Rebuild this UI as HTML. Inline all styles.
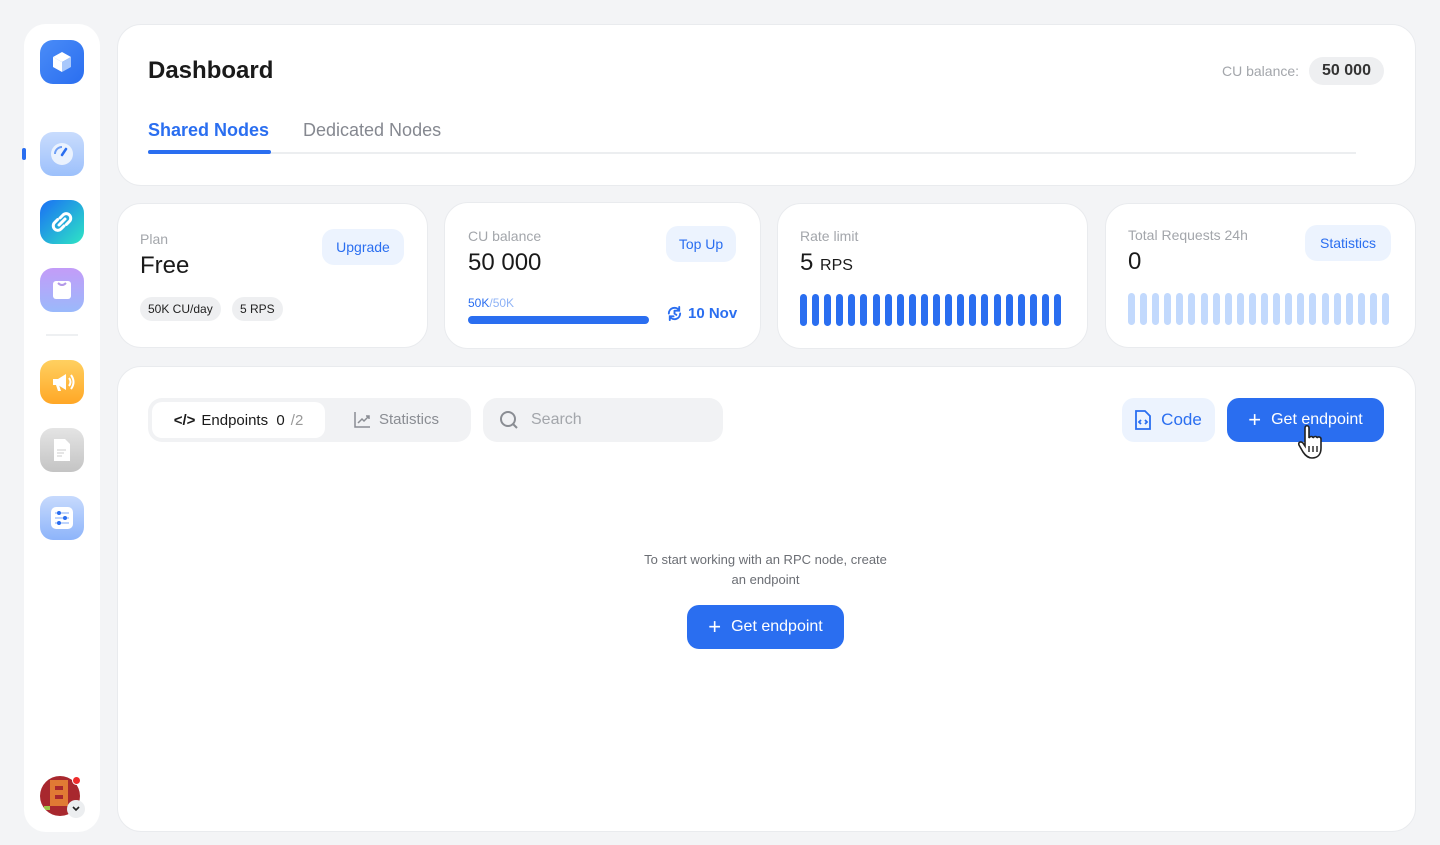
<!DOCTYPE html>
<html><head><meta charset="utf-8"><style>
*{box-sizing:border-box;margin:0;padding:0}
body{width:1440px;height:845px;background:#f3f4f6;font-family:"Liberation Sans",sans-serif;position:relative;overflow:hidden;color:#1a1a1a}
.abs{position:absolute}
.card{position:absolute;background:#fff;border:1px solid #e9ebee;border-radius:24px}
.side{left:24px;top:24px;width:76px;height:808px;background:#fff;border-radius:22px}
.ic{position:absolute;left:40px;width:44px;height:44px;border-radius:13px;display:flex;align-items:center;justify-content:center}
.lbl{font-size:14px;color:#a3a6ab}
.pill{position:absolute;background:#ecf3fe;color:#2a6ef0;font-size:14px;border-radius:12px;display:flex;align-items:center;justify-content:center}
.tag{position:absolute;background:#eeeff1;border-radius:12px;font-size:12px;height:24px;display:flex;align-items:center;padding:0 8px;color:#222}
.bars{position:absolute;display:flex;gap:5.1px}
.bars i{display:block;width:7px;height:32px;border-radius:4px}
.btn{position:absolute;background:#2a6ef0;color:#fff;border-radius:12px;font-size:16px;display:flex;align-items:center;justify-content:center;gap:10px}
</style></head><body>
<div class="abs side"></div>
<div class="ic" style="top:40px;background:linear-gradient(135deg,#4a8cf7,#2a6ef0)"><svg width="24" height="24" viewBox="0 0 24 24"><path d="M12 2 21 7 12 12 3 7Z" fill="#fff"/><path d="M3 7 12 12 12 22 3 17Z" fill="#fff"/><path d="M21 7 12 12 12 22 21 17Z" fill="#a9c8fb"/></svg></div>
<div class="abs" style="left:22px;top:148px;width:4px;height:12px;border-radius:2px;background:#2a6ef0"></div>
<div class="ic" style="top:132px;background:linear-gradient(180deg,#c9dcfd,#9cc0fb)"><svg width="26" height="26" viewBox="0 0 26 26"><circle cx="13" cy="13" r="11" fill="#eaf2fe"/><path d="M13 14 17 8" stroke="#2a6ef0" stroke-width="2.5" stroke-linecap="round"/><path d="M6 13a7 7 0 0 1 7-7" stroke="#6f9ff5" stroke-width="2" fill="none"/></svg></div>
<div class="ic" style="top:200px;background:linear-gradient(135deg,#1a6ff5,#2ee6c4)"><svg width="28" height="28" viewBox="0 0 28 28" fill="none" stroke="#fff" stroke-width="3" stroke-linecap="round"><path d="M12 10l3-3a4.5 4.5 0 0 1 6.4 6.4l-3 3"/><path d="M16 18l-3 3a4.5 4.5 0 0 1-6.4-6.4l3-3"/><path d="M11 17l6-6"/></svg></div>
<div class="ic" style="top:268px;background:linear-gradient(180deg,#c39cf8,#9ab9fb)"><svg width="22" height="22" viewBox="0 0 22 22"><rect x="2" y="2" width="18" height="18" rx="3" fill="#fff"/><path d="M7 4q4 4 8 0" stroke="#b49ae8" stroke-width="2" fill="none"/></svg></div>
<div class="abs" style="left:46px;top:334px;width:32px;height:2px;background:#eef0f2"></div>
<div class="ic" style="top:360px;background:linear-gradient(180deg,#ffd060,#ffa726)"><svg width="28" height="28" viewBox="0 0 28 28"><path d="M5 11h5l8-5v16l-8-5H5z" fill="#fff"/><path d="M8 17l2 6h3l-2-6" fill="#fff"/><path d="M21 10q3 4 0 8M23 7q5 7 0 14" stroke="#fff" stroke-width="2" fill="none"/></svg></div>
<div class="ic" style="top:428px;background:linear-gradient(180deg,#e4e4e4,#c4c4c4)"><svg width="20" height="24" viewBox="0 0 20 24"><path d="M2 1h11l5 5v17H2z" fill="#fff"/><path d="M5 12h9M5 15h7M5 18h5" stroke="#ddd" stroke-width="1.5"/></svg></div>
<div class="ic" style="top:496px;background:linear-gradient(180deg,#c7dafd,#8db4fa)"><svg width="26" height="26" viewBox="0 0 26 26"><rect x="2" y="2" width="22" height="22" rx="5" fill="#fff"/><path d="M6 8h14M6 13h14M6 18h14" stroke="#a9c6fb" stroke-width="1.5"/><circle cx="10" cy="8" r="2" fill="#2a6ef0"/><circle cx="16" cy="13" r="2" fill="#2a6ef0"/><circle cx="10" cy="18" r="2" fill="#2a6ef0"/></svg></div>
<div class="abs" style="left:40px;top:776px;width:40px;height:40px;border-radius:50%;background:#a8282e;overflow:hidden"><div class="abs" style="left:10px;top:4px;width:18px;height:26px;background:#e07a34"></div><div class="abs" style="left:15px;top:10px;width:8px;height:4px;background:#a8282e"></div><div class="abs" style="left:15px;top:19px;width:8px;height:4px;background:#a8282e"></div><div class="abs" style="left:4px;top:30px;width:6px;height:4px;background:#9ec64a"></div></div>
<div class="abs" style="left:72px;top:776px;width:9px;height:9px;border-radius:50%;background:#ee2b2b;border:1px solid #fff"></div>
<div class="abs" style="left:67px;top:800px;width:18px;height:18px;border-radius:50%;background:#eceef0;display:flex;align-items:center;justify-content:center"><svg width="10" height="8" viewBox="0 0 10 8"><path d="M2 2l3 3 3-3" stroke="#222" stroke-width="1.6" fill="none"/></svg></div>

<div class="card" style="left:117px;top:24px;width:1299px;height:162px"></div>
<div class="abs" style="left:148px;top:57px;font-size:24px;font-weight:bold">Dashboard</div>
<div class="abs lbl" style="left:1222px;top:63px;font-size:14px">CU balance:</div>
<div class="abs" style="left:1309px;top:57px;width:75px;height:28px;background:#eeeff1;border-radius:14px;font-size:16px;font-weight:bold;display:flex;align-items:center;justify-content:center;color:#333">50 000</div>
<div class="abs" style="left:148px;top:120px;font-size:18px;font-weight:bold;color:#2a6ef0">Shared Nodes</div>
<div class="abs" style="left:303px;top:120px;font-size:18px;color:#858890">Dedicated Nodes</div>
<div class="abs" style="left:148px;top:152px;width:1208px;height:2px;background:#eceef0"></div>
<div class="abs" style="left:148px;top:150px;width:123px;height:4px;border-radius:2px;background:#2a6ef0"></div>

<div class="card" style="left:117px;top:203px;width:311px;height:145px"></div>
<div class="abs lbl" style="left:140px;top:231px">Plan</div>
<div class="abs" style="left:140px;top:252px;font-size:24px">Free</div>
<div class="pill" style="left:322px;top:229px;width:82px;height:36px">Upgrade</div>
<div class="tag" style="left:140px;top:297px">50K CU/day</div>
<div class="tag" style="left:232px;top:297px">5 RPS</div>

<div class="card" style="left:444px;top:202px;width:317px;height:147px"></div>
<div class="abs lbl" style="left:468px;top:228px">CU balance</div>
<div class="abs" style="left:468px;top:249px;font-size:24px">50 000</div>
<div class="pill" style="left:666px;top:226px;width:70px;height:36px">Top Up</div>
<div class="abs" style="left:468px;top:296px;font-size:12px;color:#2a6ef0">50K<span style="color:#8fb3f6">/50K</span></div>
<div class="abs" style="left:468px;top:316px;width:181px;height:8px;border-radius:4px;background:#2a6ef0"></div>
<div class="abs" style="left:666px;top:305px;font-size:15px;font-weight:bold;color:#2a6ef0;display:flex;align-items:center;gap:5px"><svg width="17" height="17" viewBox="0 0 18 18" fill="none" stroke="#2a6ef0" stroke-width="2" stroke-linecap="round"><path d="M15 9a6 6 0 0 1-11 3.3M3 9a6 6 0 0 1 11-3.3M14 2v4h-4M4 16v-4h4M9 6v3l2 1.5"/></svg>10 Nov</div>

<div class="card" style="left:777px;top:203px;width:311px;height:146px"></div>
<div class="abs lbl" style="left:800px;top:228px">Rate limit</div>
<div class="abs" style="left:800px;top:249px;font-size:24px">5 <span style="font-size:16px">RPS</span></div>
<div class="bars" style="left:800px;top:294px" id="b1"></div>

<div class="card" style="left:1105px;top:203px;width:311px;height:145px"></div>
<div class="abs lbl" style="left:1128px;top:227px">Total Requests 24h</div>
<div class="abs" style="left:1128px;top:248px;font-size:24px">0</div>
<div class="pill" style="left:1305px;top:225px;width:86px;height:36px">Statistics</div>
<div class="bars" style="left:1128px;top:293px" id="b2"></div>

<div class="card" style="left:117px;top:366px;width:1299px;height:466px"></div>
<div class="abs" style="left:148px;top:398px;width:323px;height:44px;background:#f1f2f4;border-radius:14px"></div>
<div class="abs" style="left:152px;top:402px;width:173px;height:36px;background:#fff;border-radius:10px;display:flex;align-items:center;justify-content:center;gap:6px;font-size:15px"><b style="font-size:15px">&lt;/&gt;</b>Endpoints&nbsp; 0<span style="color:#999">/2</span></div>
<div class="abs" style="left:354px;top:411px;font-size:15px;color:#8a8d93;display:flex;gap:8px;align-items:center"><svg width="17" height="17" viewBox="0 0 17 17" fill="none" stroke="#8a8d93" stroke-width="1.5"><path d="M1 1v15h15M4 12l4-4 2 2 5-5M12 5h3v3"/></svg>Statistics</div>
<div class="abs" style="left:483px;top:398px;width:240px;height:44px;background:#f1f2f4;border-radius:14px;display:flex;align-items:center;padding-left:16px;gap:12px;font-size:16px;color:#a3a6ab"><svg width="20" height="20" viewBox="0 0 20 20" fill="none" stroke="#8a8d93" stroke-width="2"><circle cx="9" cy="9" r="7"/><path d="M14 14l4 4"/></svg>Search</div>
<div class="pill" style="left:1122px;top:398px;width:93px;height:44px;font-size:17px;gap:10px"><svg width="16" height="20" viewBox="0 0 16 20" fill="none" stroke="#2a6ef0" stroke-width="1.8"><path d="M1 1h9l5 5v13H1z"/><path d="M6 10l-2 2 2 2M10 10l2 2-2 2"/></svg>Code</div>
<div class="btn" style="left:1227px;top:398px;width:157px;height:44px;font-size:16px"><span style="font-size:22px;font-weight:300">+</span>Get endpoint</div>
<svg class="abs" style="left:1296px;top:424px" width="34" height="38" viewBox="0 0 34 38"><path d="M9 4c0-3 4-3 4 0v10c1-2 4-2 4 0 1-2 4-2 4 0 1-2 4-1 4 1v9c0 6-3 10-9 10-4 0-7-3-9-6l-4-7c-1-3 2-4 4-2l2 3z" fill="#fff" stroke="#222" stroke-width="1.6"/><path d="M13 22v6M17 22v6M21 22v6" stroke="#222" stroke-width="1.4"/></svg>
<div class="abs" style="left:600px;top:550px;width:331px;text-align:center;font-size:13px;line-height:20px;color:#6b6e74">To start working with an RPC node, create<br>an endpoint</div>
<div class="btn" style="left:687px;top:605px;width:157px;height:44px"><span style="font-size:22px;font-weight:300">+</span>Get endpoint</div>
<script>
for(const [id,c] of [["b1","#2a6ef0"],["b2","#c2d9fd"]]){let e=document.getElementById(id);for(let i=0;i<22;i++){let b=document.createElement('i');b.style.background=c;e.appendChild(b);}}
</script>
</body></html>
